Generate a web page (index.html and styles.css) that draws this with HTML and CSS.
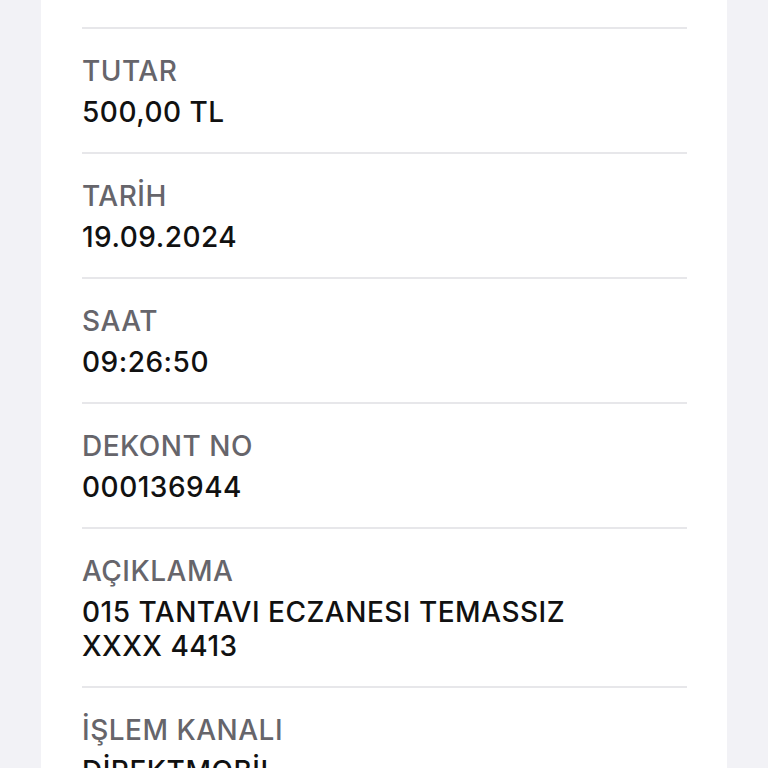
FILE: index.html
```html
<!DOCTYPE html>
<html lang="tr">
<head>
  <meta charset="UTF-8" />
  <meta name="viewport" content="width=device-width, initial-scale=1" />
  <title>Dekont Detayı</title>
  <link rel="stylesheet" href="styles.css">
</head>
<body>

  <div class="card">
    <div class="row">
      <div class="label">TUTAR</div>
      <div class="value">500,00 TL</div>
    </div>
    <div class="row">
      <div class="label">TARİH</div>
      <div class="value">19.09.2024</div>
    </div>
    <div class="row">
      <div class="label">SAAT</div>
      <div class="value">09:26:50</div>
    </div>
    <div class="row">
      <div class="label">DEKONT NO</div>
      <div class="value">000136944</div>
    </div>
    <div class="row">
      <div class="label">AÇIKLAMA</div>
      <div class="value">015 TANTAVI ECZANESI TEMASSIZ<br>XXXX 4413</div>
    </div>
    <div class="row">
      <div class="label">İŞLEM KANALI</div>
      <div class="value">DİREKTMOBİL</div>
    </div>
  </div>

</body>
</html>
```

FILE: styles.css
```css
body {
  margin: 0;
  font-family: Inter, 'Noto Sans', sans-serif;
  background-color: #f2f2f6;
  height: 768px;
  overflow: hidden;
}

.card {
  margin: 0 41px;
  background-color: #fff;
  padding: 27px 40px 0 41px;
  min-height: 768px;
}

.row {
  border-top: 2px solid #e7e7ea;
  padding: 25px 0 23px;
}

.label {
  font-size: 28px;
  font-weight: 500;
  line-height: 34px;
  letter-spacing: 0.5px;
  color: #66656b;
  margin-bottom: 7px;
}

.value {
  font-size: 28px;
  font-weight: 500;
  line-height: 34px;
  letter-spacing: 0.5px;
  color: #111;
}
```
